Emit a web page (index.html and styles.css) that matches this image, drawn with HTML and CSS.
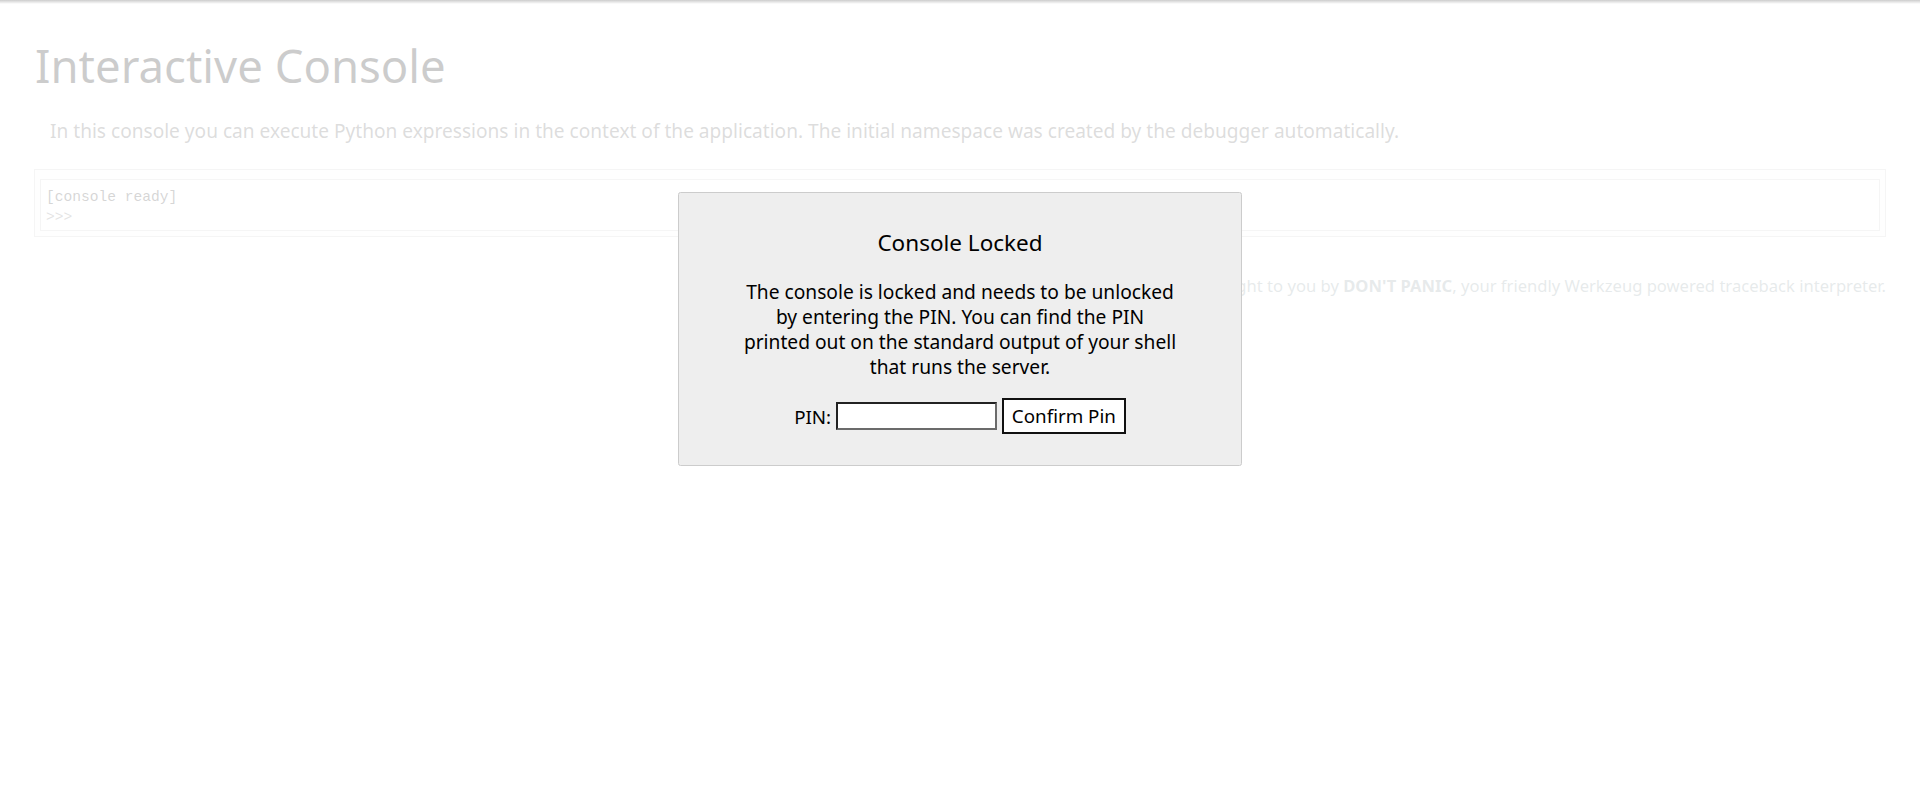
FILE: index.html
```html
<!DOCTYPE html>
<html lang="en">
<head>
  <meta charset="UTF-8" />
  <title>Console // Werkzeug Debugger</title>
  <link rel="stylesheet" href="styles.css">
</head>
<body>
  <div class="debugger">
    <h1>Interactive Console</h1>
    <div class="explanation">
      In this console you can execute Python expressions in the context of the
      application. The initial namespace was created by the debugger automatically.
    </div>
    <div class="console">
      <div class="inner">
        <pre class="output">[console ready]</pre>
        <div class="prompt-line"><span class="prompt">&gt;&gt;&gt;</span></div>
      </div>
    </div>
    <div class="footer">
      Brought to you by <strong class="arthur">DON'T PANIC</strong>, your
      friendly Werkzeug powered traceback interpreter.
    </div>
  </div>

  <div class="pin-prompt">
    <div class="inner">
      <h3>Console Locked</h3>
      <p>The console is locked and needs to be unlocked<br>by entering the PIN. You can find the PIN<br>printed out on the standard output of your shell<br>that runs the server.</p>
      <form>PIN: <input type="text" name="pin" size="14"> <input type="submit" name="btn" value="Confirm Pin"></form>
    </div>
  </div>
</body>
</html>
```

FILE: styles.css
```css
body {
  font-family: "Noto Sans", "Open Sans", sans-serif;
  font-size: 19.1px;
  margin: 0;
  background: white;
}
.debugger {
  padding: 35px 34px 15px;
}
h1 {
  font-size: 45.5px;
  font-weight: normal;
  line-height: 60px;
  margin: 0 0 0 1px;
}
.explanation {
  margin: 24px 16px 25px;
  line-height: 25px;
  color: #555;
}
.console {
  border: 1px solid #ccc;
  padding: 9px 5px 5px;
  background: #fafafa;
}
.console .inner {
  background: white;
  border: 1px solid #ccc;
  padding: 8px 5px 2px;
  font-family: "Liberation Mono", monospace;
  font-size: 14.6px;
  color: #333;
}
.output {
  margin: 0;
  font: inherit;
  line-height: 18px;
}
.prompt-line {
  line-height: 22px;
  color: #777;
}
.footer {
  font-size: 16.6px;
  text-align: right;
  margin: 37px 0;
  color: #86989B;
}

/* the lock overlay */
.pin-prompt {
  position: fixed;
  top: 0;
  left: 0;
  right: 0;
  bottom: 0;
  background: linear-gradient(to bottom, rgba(0,0,0,0.2), rgba(0,0,0,0) 4px), rgba(255,255,255,0.8);
}
.pin-prompt .inner {
  background: #eee;
  width: 437px;
  padding: 11px 62.5px 12.5px;
  margin: 192px auto 0;
  border: 1px solid #ccc;
  border-radius: 2.5px;
  text-align: center;
}
.pin-prompt h3 {
  font-size: 22.5px;
  font-weight: normal;
  margin: 22.5px 0 21px;
}
.pin-prompt p {
  font-size: 19.2px;
  line-height: 25px;
  margin: 0 0 19.2px;
}
.pin-prompt form {
  font-size: 18.75px;
  margin: 0 0 18.75px;
}
.pin-prompt input {
  font-family: inherit;
  font-size: 18.75px;
  margin: 0;
  box-sizing: border-box;
  vertical-align: baseline;
}
.pin-prompt input[type="text"] {
  width: 161px;
  height: 28px;
  padding: 0 3px;
  background: white;
  border: 2px solid;
  border-color: #222 #6b6b6b #6b6b6b #222;
  border-radius: 0;
}
.pin-prompt input[type="submit"] {
  height: 36px;
  padding: 0 8px;
  background: white;
  color: black;
  border: 2px solid #111;
  border-radius: 0;
}
```
